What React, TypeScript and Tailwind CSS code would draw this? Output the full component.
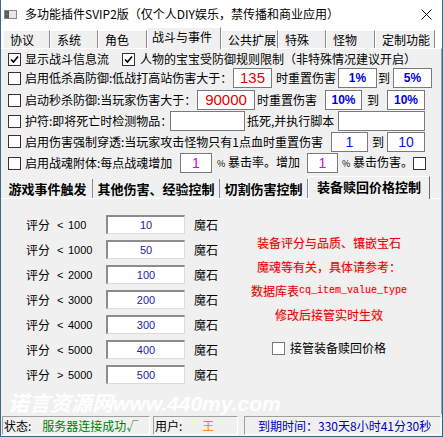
import type { ReactNode } from "react";

// Plugin settings window: battle & event tab, equipment buy-back price sub tab

function CheckBox({ checked = false }: { checked?: boolean }) {
  return (
    <span className="flex h-[13px] w-[13px] shrink-0 items-center justify-center border border-[#333] bg-white">
      {checked && (
        <svg width="9" height="9" viewBox="0 0 9 9">
          <path d="M1 4.5 L3.5 7 L8 1.5" fill="none" stroke="#000" strokeWidth="1.7" />
        </svg>
      )}
    </span>
  );
}

function Box({ className, children }: { className: string; children?: ReactNode }) {
  return (
    <span
      className={`flex h-[20px] shrink-0 items-center justify-center border border-[#7a7a7a] bg-white font-['Liberation_Sans',sans-serif] ${className}`}
    >
      {children}
    </span>
  );
}

function Label({ className, children }: { className: string; children: ReactNode }) {
  return <span className={`shrink-0 whitespace-nowrap ${className}`}>{children}</span>;
}

const topTabs = [
  { name: "协议", w: "w-[47px]" },
  { name: "系统", w: "w-[48px]" },
  { name: "角色", w: "w-[49px]" },
  { name: "战斗与事件", w: "w-[74px]", active: true },
  { name: "公共扩展", w: "w-[57px]" },
  { name: "特殊", w: "w-[48px]" },
  { name: "怪物", w: "w-[49px]" },
  { name: "定制功能", w: "w-[60px]" },
];

const subTabs = [
  { name: "游戏事件触发", w: "w-[90px]" },
  { name: "其他伤害、经验控制", w: "w-[127px]" },
  { name: "切割伤害控制", w: "w-[88px]" },
  { name: "装备赎回价格控制", w: "w-[122px]", active: true },
];

const priceRows = [
  { op: "<", score: "100", value: "10" },
  { op: "<", score: "1000", value: "50" },
  { op: "<", score: "2000", value: "100" },
  { op: "<", score: "3000", value: "200" },
  { op: "<", score: "4000", value: "300" },
  { op: "<", score: "5000", value: "400" },
  { op: ">", score: "5000", value: "500" },
];

export default function App() {
  return (
    <div className="relative flex h-[437px] w-[443px] flex-col overflow-hidden border-x border-b border-[#3a6888] bg-[#f0f0f0] font-['Noto_Sans_CJK_SC','Liberation_Sans',sans-serif] text-[12px] leading-[14px] text-black">
      {/* title bar */}
      <div className="flex h-[28px] shrink-0 items-center bg-white pl-[3px]">
        <svg width="13" height="9" viewBox="0 0 13 9" className="shrink-0">
          <rect x="0.5" y="0.5" width="12" height="8" fill="#e8e8e8" stroke="#8a8a8a" />
          <rect x="1" y="1" width="4" height="7" fill="#5a5a5a" />
          <rect x="2" y="3" width="2" height="2" fill="#3c8c6c" />
        </svg>
        <span className="ml-[8px] whitespace-nowrap">多功能插件SVIP2版（仅个人DIY娱乐，禁传播和商业应用）</span>
        <svg width="11" height="11" viewBox="0 0 11 11" className="ml-auto mr-[10px]">
          <path d="M0.5 0.5 L10.5 10.5 M10.5 0.5 L0.5 10.5" stroke="#111" strokeWidth="1" />
        </svg>
      </div>

      {/* main tab strip */}
      <div className="flex h-[20px] shrink-0 items-end bg-white pl-[2px]">
        {topTabs.map((t) =>
          t.active ? (
            <div
              key={t.name}
              className={`${t.w} relative z-10 -mb-[1px] flex h-[22px] items-center border-l border-t border-r border-l-white border-t-white border-r-[#8a8a8a] bg-[#f0f0f0] pb-[3px] pl-[4px]`}
            >
              {t.name}
            </div>
          ) : (
            <div
              key={t.name}
              className={`${t.w} flex h-[18px] items-center border-l border-t border-r border-l-white border-t-white border-r-[#8a8a8a] bg-[#f0f0f0] pl-[6px]`}
            >
              {t.name}
            </div>
          )
        )}
      </div>

      {/* battle & event page */}
      <div className="flex flex-1 flex-col border-t border-r border-t-white border-r-[#a0a0a0]">
        <div className="mt-[1px] flex h-[18px] items-center pl-[7px]">
          <CheckBox checked />
          <Label className="ml-[4px] w-[97px]">显示战斗信息流</Label>
          <CheckBox checked />
          <Label className="ml-[5px] w-auto">人物的宝宝受防御规则限制（非特殊情况建议开启）</Label>
        </div>

        <div className="flex h-[20px] items-center pl-[7px]">
          <CheckBox />
          <Label className="ml-[4px] w-[208px]">启用低杀高防御:低战打高站伤害大于：</Label>
          <Box className="w-[39px] text-[15px] text-[#e00000]">135</Box>
          <Label className="w-[66px] pl-[4px]">时重置伤害</Label>
          <Box className="w-[39px] text-[12px] font-bold text-[#0000e0]">1%</Box>
          <Label className="w-[16px] pl-[1px]">到</Label>
          <Box className="w-[39px] text-[12px] font-bold text-[#0000e0]">5%</Box>
        </div>

        <div className="mt-[2px] flex h-[20px] items-center pl-[7px]">
          <CheckBox />
          <Label className="ml-[4px] w-[172px]">启动秒杀防御:当玩家伤害大于：</Label>
          <Box className="w-[58px] text-[15px] text-[#e00000]">90000</Box>
          <Label className="w-[70px] pl-[2px]">时重置伤害</Label>
          <Box className="w-[37px] text-[12px] font-bold text-[#0000e0]">10%</Box>
          <Label className="w-[25px] pl-[5px]">到</Label>
          <Box className="w-[38px] text-[12px] font-bold text-[#0000e0]">10%</Box>
        </div>

        <div className="mt-[1px] flex h-[20px] items-center pl-[7px]">
          <CheckBox />
          <Label className="ml-[4px] w-[145px]">护符:即将死亡时检测物品：</Label>
          <Box className="w-[75px]" />
          <Label className="w-[93px] pl-[2px]">抵死,并执行脚本</Label>
          <Box className="w-[87px]" />
        </div>

        <div className="mt-[1px] flex h-[19px] items-center pl-[7px]">
          <CheckBox />
          <Label className="ml-[4px] w-[306px]">启用伤害强制穿透:当玩家攻击怪物只有1点血时重置伤害</Label>
          <Box className="h-[19px] w-[37px] text-[14px] text-[#0a14d8]">1</Box>
          <Label className="w-[19px] pl-[4px]">到</Label>
          <Box className="h-[19px] w-[38px] text-[14px] text-[#0a14d8]">10</Box>
        </div>

        <div className="mt-[2px] flex h-[20px] items-center pl-[7px]">
          <CheckBox />
          <Label className="ml-[4px] w-[155px]">启用战魂附体:每点战魂增加</Label>
          <Box className="w-[32px] text-[14px] text-[#e000e0]">1</Box>
          <Label className="w-[95px] pl-[5px]">
            <span className="text-[9px]">%</span> 暴击率。增加
          </Label>
          <Box className="w-[31px] text-[14px] text-[#e000e0]">1</Box>
          <Label className="w-[75px] pl-[4px]">
            <span className="text-[9px]">%</span> 暴击伤害。
          </Label>
          <CheckBox />
        </div>

        {/* sub tab strip */}
        <div className="mt-[4px] flex h-[21px] items-end pl-[2px] text-[13px] font-bold">
          {subTabs.map((t) =>
            t.active ? (
              <div
                key={t.name}
                className={`${t.w} relative z-10 -mb-[1px] flex h-[23px] items-center justify-center border-l border-t border-r border-l-white border-t-white border-r-[#6a6a6a] bg-[#f0f0f0] pb-[3px]`}
              >
                {t.name}
              </div>
            ) : (
              <div
                key={t.name}
                className={`${t.w} flex h-[19px] items-center justify-center border-r border-r-[#8a8a8a]`}
              >
                {t.name}
              </div>
            )
          )}
        </div>

        {/* buy-back price page */}
        <div className="flex flex-1 border-t border-t-white">
          <div className="flex w-[237px] shrink-0 flex-col pt-[13px]">
            {priceRows.map((r) => (
              <div key={r.op + r.score} className="flex h-[25px] items-center pl-[25px]">
                <span className="w-[31px] shrink-0">评分</span>
                <span className="w-[11px] shrink-0 font-['Liberation_Sans',sans-serif] text-[11px]">{r.op}</span>
                <span className="w-[38px] shrink-0 font-['Liberation_Sans',sans-serif] text-[11px]">{r.score}</span>
                <span className="flex h-[19px] w-[79px] shrink-0 items-center justify-center border-t-2 border-l-2 border-r border-b border-t-[#8c8c8c] border-l-[#8c8c8c] border-r-[#dcdcdc] border-b-[#dcdcdc] bg-white font-['Liberation_Sans',sans-serif] text-[11px] text-[#1c1ca4]">
                  {r.value}
                </span>
                <span className="ml-[9px]">魔石</span>
              </div>
            ))}
          </div>

          <div className="flex w-[182px] shrink-0 flex-col items-center pt-[32px] text-[#e80000] [text-shadow:0_0_1.5px_#ffb4b4]">
            <div className="flex h-[24px] items-center whitespace-nowrap">装备评分与品质、镶嵌宝石</div>
            <div className="flex h-[24px] items-center whitespace-nowrap">魔魂等有关，具体请参考：</div>
            <div className="flex h-[24px] items-center whitespace-nowrap">
              数据库表<span className="font-['Liberation_Mono',monospace] text-[10px]">cq_item_value_type</span>
            </div>
            <div className="flex h-[24px] items-center whitespace-nowrap">修改后接管实时生效</div>
            <div className="mt-[9px] flex h-[24px] items-center whitespace-nowrap text-black [text-shadow:none]">
              <span className="h-[13px] w-[13px] border border-[#7a7a7a] bg-white" />
              <span className="ml-[5px]">接管装备赎回价格</span>
            </div>
          </div>
        </div>
      </div>

      {/* status bar */}
      <div className="mt-[2px] mb-[1px] flex h-[19px] shrink-0 items-stretch pl-[1px]">
        <div className="flex w-[148px] items-center border-t border-l border-r border-b border-t-[#a0a0a0] border-l-[#a0a0a0] border-r-white border-b-white pl-[1px]">
          <span>状态:</span>
          <span className="ml-[11px] text-[#008000]">服务器连接成功√</span>
        </div>
        <div className="ml-[3px] flex w-[85px] items-center border-t border-l border-r border-b border-t-[#a0a0a0] border-l-[#a0a0a0] border-r-white border-b-white pl-[1px]">
          <span>用户:</span>
          <span className="ml-[20px] text-[#ff8000]">王</span>
        </div>
        <div className="ml-[6px] flex w-[197px] items-center border-t border-l border-r border-b border-t-[#a0a0a0] border-l-[#a0a0a0] border-r-white border-b-white pl-[13px] text-[#0000c0]">
          到期时间：330天8小时41分30秒
        </div>
      </div>

      {/* site watermark over the page */}
      <div className="pointer-events-none absolute left-[7px] top-[394px] whitespace-nowrap font-['Liberation_Sans','Noto_Sans_CJK_SC',sans-serif] text-[21px] font-bold italic leading-[19px] text-white/90">
        诺言资源网www.440my.com
      </div>
    </div>
  );
}
